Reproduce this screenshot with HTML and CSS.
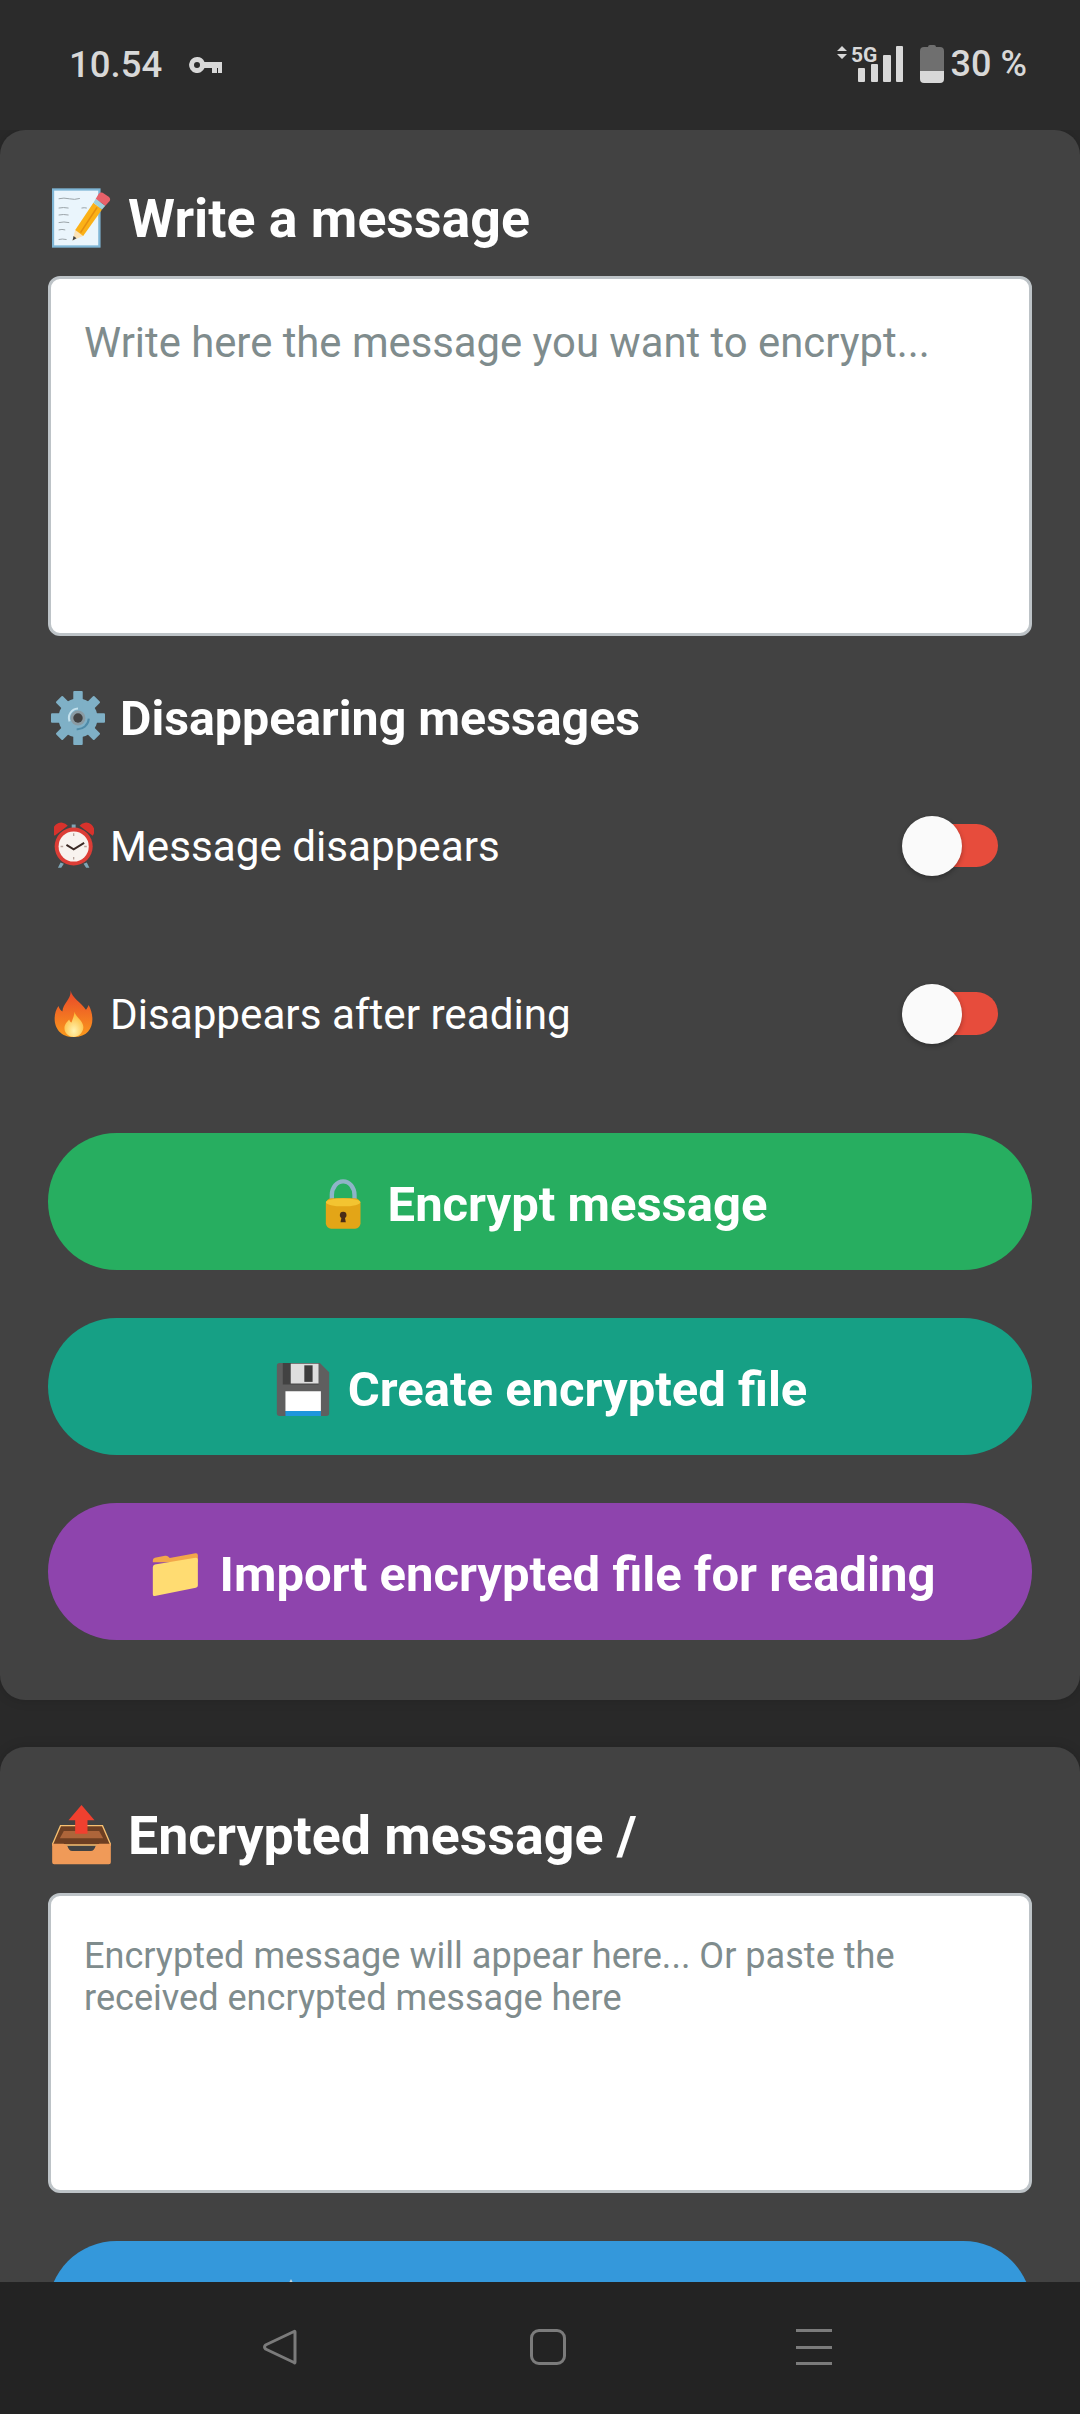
FILE: index.html
```html
<!DOCTYPE html>
<html lang="en">
<head>
    <meta charset="UTF-8">
    <meta name="viewport" content="width=device-width, initial-scale=1.0">
    <title>Encrypted messages</title>
    <link rel="stylesheet" href="styles.css">
</head>
<body>
<div class="screen">
    <header class="status-bar">
        <div class="status-left">
            <span class="clock">10.54</span>
            <svg class="key-icon" viewBox="0 0 33 16"><path d="M8 0a8 8 0 0 1 7.500 5H33v6h0v5h-4v-5h-1v5h-5v-5h-7.500A8 8 0 1 1 8 0zm0 5a3 3 0 1 0 0 6 3 3 0 0 0 0-6z" fill-rule="evenodd"/></svg>
        </div>
        <div class="status-right">
            <svg class="signal-icon" viewBox="0 0 68 38">
                <path d="M5 1l5 5H0zM5 14L0 9h10z"/>
                <text x="14" y="17" class="signal-label">5G</text>
                <rect x="21" y="23" width="7" height="14" rx="1"/>
                <rect x="34" y="19" width="7" height="18" rx="1"/>
                <rect x="46" y="10" width="8" height="27" rx="1"/>
                <rect x="59" y="1" width="7" height="36" rx="1"/>
            </svg>
            <svg class="battery-icon" viewBox="0 0 24 38">
                <path d="M8 2q0-2 2-2h4q2 0 2 2h4q4 0 4 4v21H0V6q0-4 4-4z" fill="#6f6f6f"/>
                <path d="M0 26h24v8q0 4-4 4H4q-4 0-4-4z" fill="#d8d8d8"/>
            </svg>
            <span class="battery-text">30 %</span>
        </div>
    </header>

    <main class="content">
        <section class="card">
            <h2 class="card-title">
                <svg class="emoji emoji-title" viewBox="66 57 178 178">
                    <rect x="69" y="60" width="140" height="172" fill="#eaf5fc" stroke="#7fb6d6" stroke-width="7"/>
                    <path d="M86 88q16-4 32 0t32-1M86 116q14-3 30 0M86 137q14-3 30 0M86 160q16-4 32 0M86 182q10-3 20 0M86 211q10-3 24 0M155 116q8-2 16 0" fill="none" stroke="#9aa3a8" stroke-width="3"/>
                    <path d="M128 214l8-32 24 18z" fill="#fbe3b8"/>
                    <path d="M128 214l3-14 9 7z" fill="#444"/>
                    <path d="M136 182l55-82 26 20-57 80z" fill="#fbb117"/>
                    <path d="M152 190l50-76" stroke="#e58f10" stroke-width="5"/>
                    <path d="M191 100l7-12 29 21-10 11z" fill="#9ed0dc"/>
                    <path d="M198 88l9-15q5-6 12-3l18 12q7 6 3 13l-13 14z" fill="#e8616a"/>
                </svg>
                Write a message
            </h2>
            <textarea class="message-box message-box-large" placeholder="Write here the message you want to encrypt..."></textarea>

            <h3 class="section-title">
                <svg class="emoji emoji-gear" viewBox="0 0 160 160">
                    <g fill="#7fb0c6">
                        <circle cx="80" cy="80" r="58"/>
                        <rect x="66" y="0" width="28" height="160" rx="3"/>
                        <rect x="66" y="0" width="28" height="160" rx="3" transform="rotate(45 80 80)"/>
                        <rect x="66" y="0" width="28" height="160" rx="3" transform="rotate(90 80 80)"/>
                        <rect x="66" y="0" width="28" height="160" rx="3" transform="rotate(135 80 80)"/>
                    </g>
                    <circle cx="80" cy="80" r="22" fill="#8a9ba3"/>
                    <circle cx="80" cy="80" r="14" fill="#424242"/>
                    <path d="M55 90a28 28 0 0 1 25-38" fill="none" stroke="#c5e2ee" stroke-width="6"/>
                    <path d="M112 82a33 33 0 0 1-36 31" fill="none" stroke="#4f8ba8" stroke-width="6"/>
                </svg>
                Disappearing messages
            </h3>

            <div class="option-row">
                <span class="option-label">
                    <svg class="emoji emoji-option" viewBox="72 460 122 140">
                        <path d="M92 582l-8 16h10l8-12zM172 582l8 16h-10l-8-12z" fill="#7ea5b5"/>
                        <rect x="126" y="466" width="12" height="20" fill="#7ea5b5"/>
                        <path d="M74 500a24 24 0 0 1 40-30zM190 500a24 24 0 0 0-40-30z" fill="#d8322c"/>
                        <circle cx="132" cy="533" r="58" fill="#dc3d36"/>
                        <circle cx="132" cy="533" r="46" fill="#f8f3ef"/>
                        <path d="M110 528l22 14 32-20" fill="none" stroke="#3b2a25" stroke-width="6"/>
                        <path d="M132 493v8M132 565v8M92 533h8M164 533h8" stroke="#b9a49c" stroke-width="4"/>
                    </svg>
                    <span class="option-text">Message disappears</span>
                </span>
                <span class="toggle"><span class="toggle-knob"></span></span>
            </div>

            <div class="option-row">
                <span class="option-label">
                    <svg class="emoji emoji-option" viewBox="75 965 115 140">
                        <defs>
                            <linearGradient id="flame" x1="0" y1="0" x2="0" y2="1">
                                <stop offset="0" stop-color="#e8452a"/>
                                <stop offset="1" stop-color="#fb9a1c"/>
                            </linearGradient>
                            <radialGradient id="flame-core" cx="0.5" cy="0.75" r="0.7">
                                <stop offset="0" stop-color="#fff3b0"/>
                                <stop offset="1" stop-color="#fdb62f"/>
                            </radialGradient>
                        </defs>
                        <path d="M122 966c6 26 30 34 46 58 6-6 8-14 8-14 22 40 14 95-44 95-60 0-68-60-46-92 4 10 8 14 12 16 2-26 28-38 24-63z" fill="url(#flame)"/>
                        <path d="M134 1030c4 18 30 28 26 50-3 16-16 25-28 25s-28-9-28-26c0-14 10-20 14-26 2 6 5 8 7 9 3-10 8-18 9-32z" fill="url(#flame-core)"/>
                    </svg>
                    <span class="option-text">Disappears after reading</span>
                </span>
                <span class="toggle"><span class="toggle-knob"></span></span>
            </div>

            <div class="actions">
                <button class="action-btn btn-encrypt">
                    <svg class="emoji emoji-lock" viewBox="590 180 107 150">
                        <path d="M610 250v-22c0-22 15-41 34-41s34 19 34 41v22" fill="none" stroke="#8fb4c8" stroke-width="13"/>
                        <rect x="592" y="238" width="104" height="91" rx="16" fill="#e3a517"/>
                        <ellipse cx="644" cy="250" rx="52" ry="12" fill="#f3c431"/>
                        <circle cx="644" cy="288" r="10" fill="#4a2c17"/>
                        <path d="M640 290h8l4 20h-16z" fill="#4a2c17"/>
                    </svg>
                    Encrypt message
                </button>
                <button class="action-btn btn-file">
                    <svg class="emoji emoji-floppy" viewBox="442 725 158 160">
                        <path d="M450 725h122l28 28v124q0 8-8 8H450q-8 0-8-8V733q0-8 8-8z" fill="#5f5f5f"/>
                        <path d="M460 725h108v65H460z" fill="#424242"/>
                        <path d="M484 727h84v60h-84z" fill="#dedede"/>
                        <path d="M525 732h25v50h-25z" fill="#3c3c3c"/>
                        <path d="M468 810h107v60H468z" fill="#fff"/>
                        <path d="M468 870h107v15H468z" fill="#1e96dc"/>
                    </svg>
                    Create encrypted file
                </button>
                <button class="action-btn btn-import">
                    <svg class="emoji emoji-folder" viewBox="70 1303 135 127">
                        <path d="M72 1325q0-6 6-8l30-6q6-1 10 3l4 4 76-14q7-1 7 6v20H72z" fill="#f2a74a"/>
                        <path d="M72 1345q0-6 6-8l120-20q7-1 7 6v76q0 6-6 7L78 1430q-6 1-6-5z" fill="#ffdc72"/>
                    </svg>
                    Import encrypted file for reading
                </button>
            </div>
        </section>

        <section class="card">
            <h2 class="card-title">
                <svg class="emoji emoji-title" viewBox="157 438 176 180">
                    <path d="M182 500h126l25 58H157z" fill="#6e3f22" stroke="#f6c071" stroke-width="4"/>
                    <path d="M180 538l12-22h106l12 22z" fill="#ad653a"/>
                    <path d="M157 554h34q8 0 12 8 4 14 14 14h56q10 0 14-14 4-8 12-8h34v56q0 6-6 6H163q-6 0-6-6z" fill="#f09a58"/>
                    <path d="M245 438l39 46h-21v40h-37v-40h-20z" fill="#f0402f"/>
                </svg>
                Encrypted message /
            </h2>
            <textarea class="message-box message-box-small" placeholder="Encrypted message will appear here... Or paste the received encrypted message here"></textarea>
            <button class="action-btn btn-decrypt">
                <svg class="emoji emoji-tip" viewBox="0 0 66 66"><path d="M33 0l4 8H29z" fill="#c9d6dc"/></svg>
            </button>
        </section>
    </main>

    <nav class="nav-bar">
        <svg class="nav-back" viewBox="0 0 34 36"><path d="M32 3v30q0 1.500-1 .500L2.500 20q-2-2 0-4L31 2.500q1-.500 1 .500z" fill="none" stroke="#7b7b7b" stroke-width="3" stroke-linejoin="round"/></svg>
        <span class="nav-home"></span>
        <span class="nav-menu"><i></i><i></i><i></i></span>
    </nav>
</div>
</body>
</html>
```

FILE: styles.css
```css
* {
    box-sizing: border-box;
}

html, body {
    margin: 0;
    padding: 0;
    background-color: #292929;
}

body {
    font-family: Roboto, "Noto Sans", sans-serif;
    color: #fff;
}

.screen {
    display: flex;
    flex-direction: column;
    width: 1080px;
    height: 2414px;
    overflow: hidden;
}

/* status bar */
.status-bar {
    display: flex;
    flex: none;
    justify-content: space-between;
    align-items: center;
    height: 130px;
    padding: 0 53px 2px 69px;
    color: #d8d8d8;
    background-color: #2b2b2b;
}

.status-left, .status-right {
    display: flex;
    align-items: center;
}

.clock {
    font-size: 36.5px;
    font-weight: 500;
}

.key-icon {
    width: 33px;
    height: 16px;
    margin: 2px 0 0 27px;
    fill: #d8d8d8;
}

.signal-icon {
    width: 68px;
    height: 38px;
    fill: #d8d8d8;
    margin-right: 15px;
    overflow: visible;
}

.signal-label {
    font-size: 21px;
    font-weight: 700;
}

.battery-icon {
    width: 24px;
    height: 38px;
    margin-right: 7px;
}

.battery-text {
    font-size: 36px;
    font-weight: 500;
}

/* cards */
.content {
    flex: 1;
    min-height: 0;
    overflow: hidden;
}

.card {
    background-color: #424242;
    border-radius: 25px;
    padding: 48px 48px 60px;
    margin-bottom: 47px;
    box-shadow: 0 0 12px rgba(0, 0, 0, 0.15);
}

.card-title {
    display: flex;
    align-items: center;
    gap: 17px;
    height: 80px;
    margin: 0 0 18px;
    padding-left: 4px;
    font-size: 53.7px;
    font-weight: 700;
}

.section-title {
    display: flex;
    align-items: center;
    gap: 15px;
    height: 68px;
    margin: 48px 0 33px;
    padding-left: 3px;
    font-size: 48.3px;
    font-weight: 700;
}

.emoji {
    flex: none;
}

.emoji-title {
    width: 59px;
    height: 60px;
}

.emoji-gear {
    width: 54px;
    height: 54px;
}

.emoji-option {
    width: 40px;
    height: 47px;
}

/* button emoji sit centred in a 60px box, like a glyph's advance */
.emoji-lock {
    width: 60px;
    height: 50px;
}

.emoji-floppy {
    width: 60px;
    height: 53px;
}

.emoji-folder {
    width: 60px;
    height: 43px;
}

.emoji-tip {
    width: 66px;
    height: 66px;
}

/* textareas */
.message-box {
    display: block;
    width: 100%;
    padding: 39px 33px;
    border: 3px solid #bdc3c7;
    border-radius: 12px;
    background-color: #fff;
    font-family: Roboto, "Noto Sans", sans-serif;
    resize: none;
}

.message-box::placeholder {
    color: #7f8c8d;
    opacity: 1;
}

.message-box-large {
    height: 360px;
    font-size: 41.8px;
}

.message-box-small {
    height: 300px;
    font-size: 36.1px;
    line-height: 42px;
}

/* options */
.option-row {
    display: flex;
    justify-content: space-between;
    align-items: center;
    height: 120px;
    margin-bottom: 48px;
    padding-right: 34px;
}

.option-label {
    display: flex;
    align-items: center;
    gap: 16px;
    padding-left: 6px;
    font-size: 42.2px;
}

.option-text {
    padding-top: 2px;
}

.toggle {
    position: relative;
    display: block;
    width: 80px;
    height: 43px;
    border-radius: 22px;
    background-color: #e74c3c;
}

.toggle-knob {
    position: absolute;
    left: -16px;
    top: -8px;
    width: 60px;
    height: 60px;
    border-radius: 50%;
    background-color: #fafafa;
    box-shadow: 0 2px 5px rgba(0, 0, 0, 0.3);
}

/* buttons */
.actions {
    display: flex;
    flex-direction: column;
    gap: 48px;
    margin-top: 60px;
}

.action-btn {
    display: flex;
    justify-content: center;
    align-items: center;
    gap: 15px;
    width: 100%;
    height: 137px;
    padding: 5px 0 0;
    border: none;
    border-radius: 69px;
    color: #fff;
    font-family: Roboto, "Noto Sans", sans-serif;
    font-size: 49px;
    font-weight: 700;
}

.btn-encrypt {
    background-color: #27ae60;
}

.btn-file {
    background-color: #16a085;
}

.btn-import {
    background-color: #8e44ad;
}

.btn-decrypt {
    justify-content: flex-start;
    padding-left: 210px;
    margin-top: 48px;
    background-color: #3498db;
}

/* bottom nav */
.nav-bar {
    display: flex;
    flex: none;
    align-items: center;
    height: 132px;
    padding: 0 0 2px 263px;
    background-color: #232323;
    position: relative;
}

.nav-back {
    width: 34px;
    height: 36px;
}

.nav-home {
    width: 36px;
    height: 36px;
    margin-left: 233px;
    border: 3px solid #7b7b7b;
    border-radius: 9px;
}

.nav-menu {
    display: flex;
    flex-direction: column;
    justify-content: space-between;
    width: 36px;
    height: 36px;
    margin-left: 230px;
}

.nav-menu i {
    display: block;
    height: 3px;
    background-color: #7b7b7b;
}
```
